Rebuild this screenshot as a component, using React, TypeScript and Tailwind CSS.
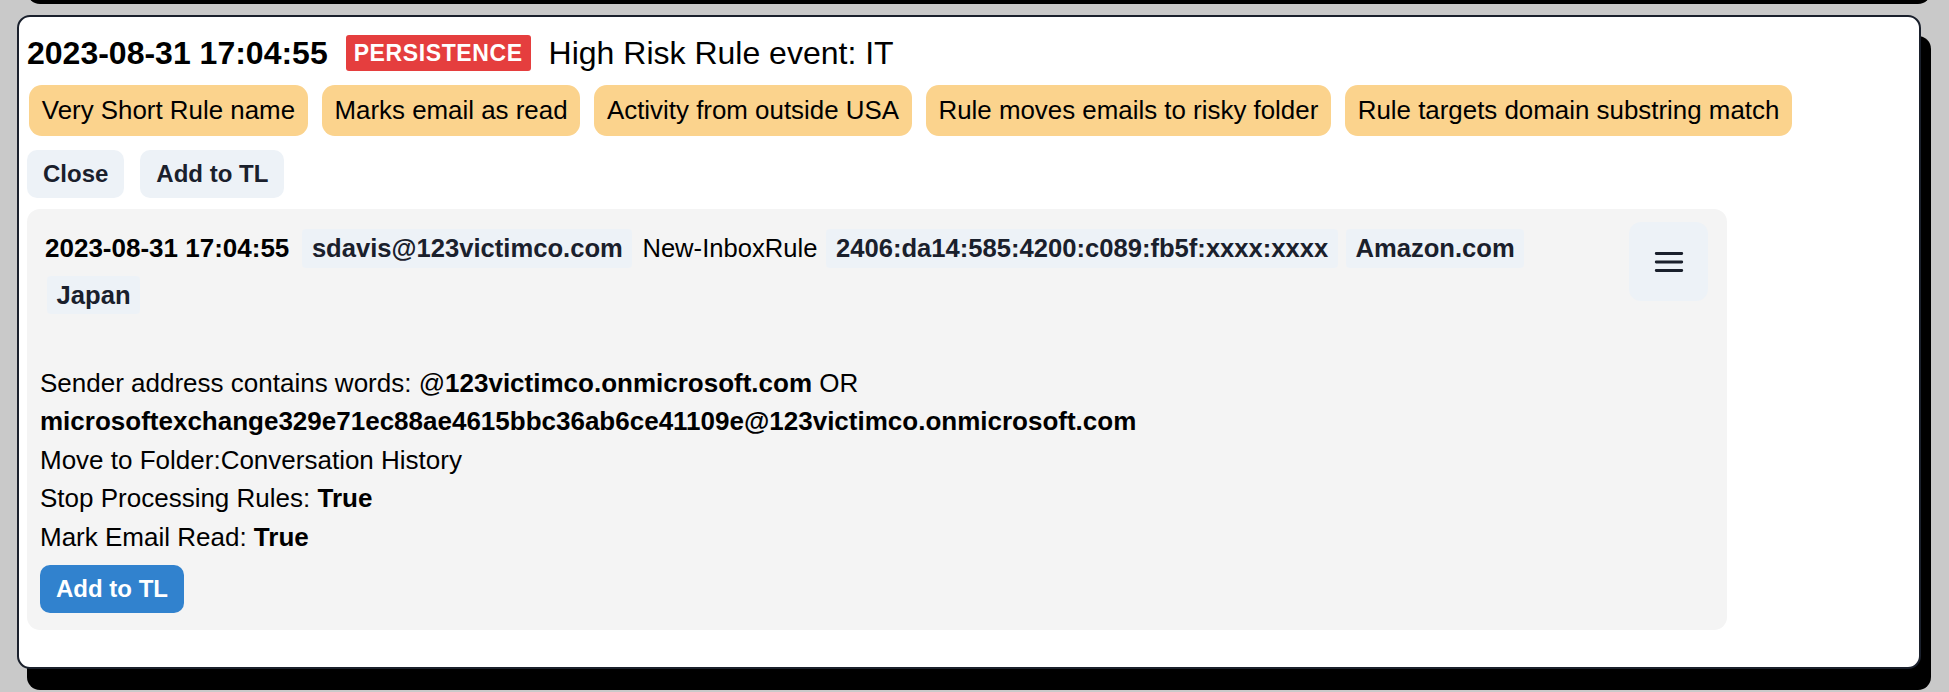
import { Fragment } from 'react';

const ruleTags = [
  'Very Short Rule name',
  'Marks email as read',
  'Activity from outside USA',
  'Rule moves emails to risky folder',
  'Rule targets domain substring match',
];

function HamburgerIcon() {
  return (
    <svg width="34" height="34" viewBox="0 0 24 24" className="text-[#1a202c]">
      <path
        fill="currentColor"
        d="M 3 5 A 1.0001 1.0001 0 1 0 3 7 L 21 7 A 1.0001 1.0001 0 1 0 21 5 L 3 5 z M 3 11 A 1.0001 1.0001 0 1 0 3 13 L 21 13 A 1.0001 1.0001 0 1 0 21 11 L 3 11 z M 3 17 A 1.0001 1.0001 0 1 0 3 19 L 21 19 A 1.0001 1.0001 0 1 0 21 17 L 3 17 z"
      />
    </svg>
  );
}

function Code({ children, className = '' }: { children: React.ReactNode; className?: string }) {
  return (
    <span
      className={`rounded-[4px] bg-[#edf2f7] px-[9.6px] text-[25.6px] leading-[38.4px] font-bold text-[#1a202c] ${className}`}
    >
      {children}
    </span>
  );
}

function EventRow() {
  return (
    <div className="rounded-[13px] bg-[#f4f4f4] px-[13px] pt-[13px] pb-[17px]">
      {/* header line */}
      <div className="flex items-start justify-between gap-[24px]">
        <div className="flex flex-1 flex-wrap items-center gap-y-[8px] pl-[5px] pt-[7px]">
          <span className="mr-[13px] text-[26px] leading-[38.4px] font-bold text-black">
            2023-08-31 17:04:55
          </span>
          <Code className="mr-[10px]">sdavis@123victimco.com</Code>
          <span className="mr-[9px] text-[25.6px] leading-[38.4px] text-black">New-InboxRule</span>
          <Code className="mr-[8px]">2406:da14:585:4200:c089:fb5f:xxxx:xxxx</Code>
          <Code>Amazon.com</Code>
          <Code className="ml-[2px]">Japan</Code>
        </div>
        <button className="mr-[6px] flex h-[79px] w-[79px] shrink-0 items-center justify-center rounded-[12px] bg-[#edf2f7]">
          <HamburgerIcon />
        </button>
      </div>

      {/* rule details */}
      <div className="mt-[50px] text-[26px] leading-[38.4px] text-black">
        <div>
          Sender address contains words: @<b>123victimco.onmicrosoft.com</b> OR{' '}
          <b>microsoftexchange329e71ec88ae4615bbc36ab6ce41109e@123victimco.onmicrosoft.com</b>
        </div>
        <div>Move to Folder:Conversation History</div>
        <div>
          Stop Processing Rules: <b>True</b>
        </div>
        <div>
          Mark Email Read: <b>True</b>
        </div>
      </div>
      <button className="mt-[9px] h-[48px] rounded-[10px] bg-[#3182ce] px-[16px] text-[24px] font-bold text-white">
        Add to TL
      </button>
    </div>
  );
}

export default function App() {
  return (
    <div
      className="flex min-h-screen flex-col gap-[32px] overflow-hidden bg-[#c9c9c9] px-[17px]"
      style={{ fontFamily: '"Liberation Sans", Arial, sans-serif' }}
    >
      {/* previous card, only its shadow peeks in at the top */}
      <div className="-mt-[57px] h-[40px] w-[1904px] shrink-0 rounded-[13px] border-2 border-[#1a202c] bg-white shadow-[10px_21px_0_0_#000]" />

      <div className="w-[1904px] shrink-0 rounded-[13px] border-2 border-[#1a202c] bg-white px-[8px] pt-[12px] pb-[37px] shadow-[10px_21px_0_0_#000]">
        {/* title */}
        <div className="flex h-[48px] items-center">
          <span className="text-[32px] font-bold text-black">2023-08-31 17:04:55</span>
          <span className="ml-[18px] flex h-[36px] items-center rounded-[3px] bg-[#e53e3e] px-[8px] text-[23px] font-bold tracking-[0.6px] text-white">
            PERSISTENCE
          </span>
          <span className="ml-[18px] text-[32px] text-black">High Risk Rule event: IT</span>
        </div>

        {/* tags */}
        <div className="mt-[8px] flex flex-wrap gap-[13.8px] pl-[2px]">
          {ruleTags.map((t) => (
            <Fragment key={t}>
              <span className="rounded-[12.8px] bg-[#fbd38d] px-[12.8px] py-[6.4px] text-[25.9px] leading-[38.4px] text-black">
                {t}
              </span>
            </Fragment>
          ))}
        </div>

        {/* actions */}
        <div className="mt-[14px] flex gap-[16px]">
          <button className="h-[48px] rounded-[10px] bg-[#edf2f7] px-[16px] text-[24px] font-bold text-[#1a202c]">
            Close
          </button>
          <button className="h-[48px] rounded-[10px] bg-[#edf2f7] px-[16px] text-[24px] font-bold text-[#1a202c]">
            Add to TL
          </button>
        </div>

        <div className="mt-[11px] w-[1700px]">
          <EventRow />
        </div>
      </div>
    </div>
  );
}
